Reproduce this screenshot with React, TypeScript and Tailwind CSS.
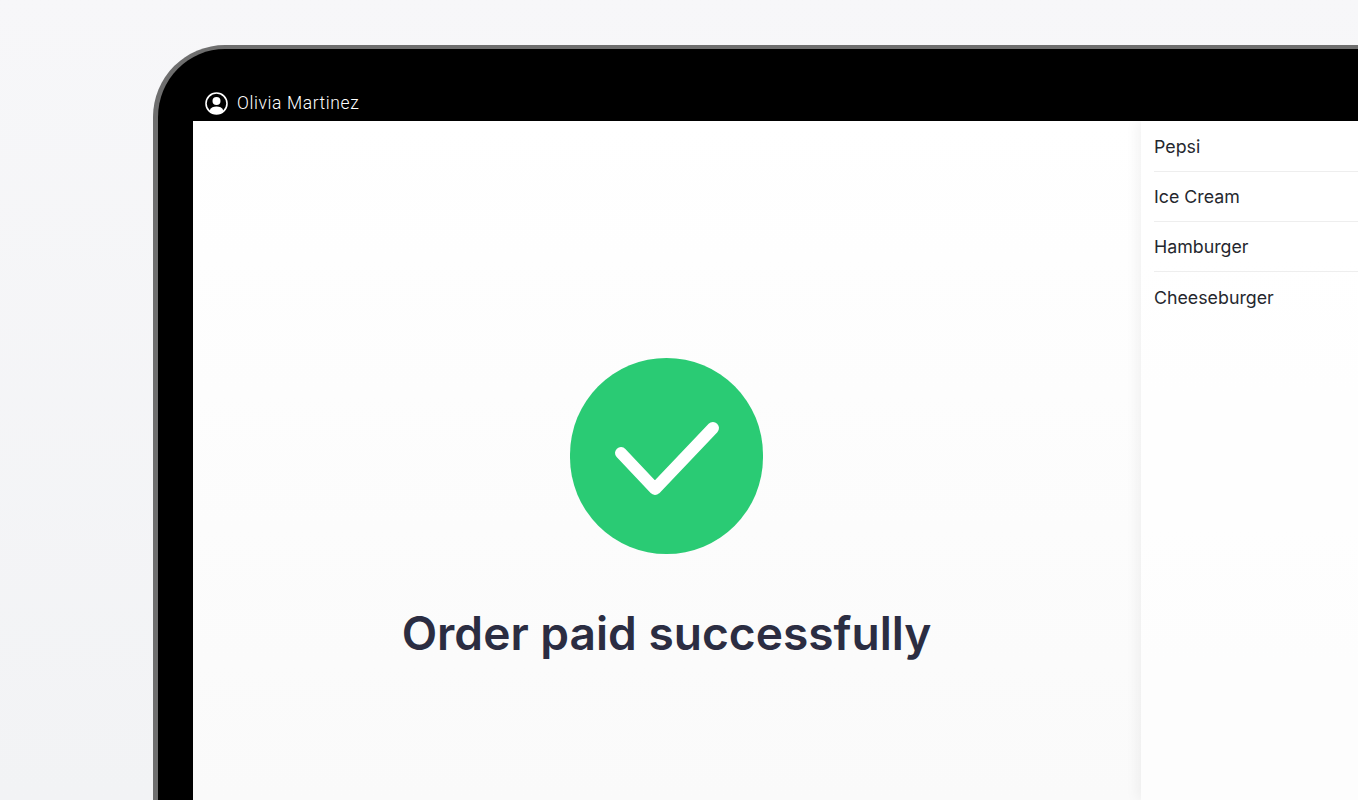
export default function App() {
  const items = ["Pepsi", "Ice Cream", "Hamburger", "Cheeseburger"];
  return (
    <div className="h-[800px] w-[1358px] overflow-hidden bg-gradient-to-b from-[#f7f7f9] to-[#f2f3f5] pl-[153px] pt-[45px] font-['Inter',sans-serif]">
      <div className="flex h-[755px] flex-col rounded-tl-[72px] border-l-[5px] border-t-[4px] border-[#6e6e6e] bg-black pl-[35px]">
        <header className="flex h-[72px] shrink-0 items-end pb-[6px] pl-[12px] text-white">
          <svg width="23" height="23" viewBox="0 0 23 23" className="shrink-0">
            <circle cx="11.5" cy="11.5" r="10.5" fill="none" stroke="white" strokeWidth="1.6" />
            <circle cx="11.5" cy="9" r="4" fill="white" />
            <path d="M4.5 18.5C6 15.3 8.5 14.5 11.5 14.5s5.5.8 7 4c-1.8 2-4.3 3.4-7 3.4s-5.2-1.4-7-3.4z" fill="white" />
          </svg>
          <span className="ml-[9px] text-[17.5px] leading-[23px] font-light tracking-[0.6px] font-['Roboto',sans-serif]">Olivia Martinez</span>
        </header>
        <div className="flex min-h-0 flex-1 bg-gradient-to-b from-white to-[#fafafa]">
          <main className="flex flex-1 flex-col items-center pr-[1px] pt-[237px]">
            <div className="flex h-[196px] w-[193px] items-center justify-center rounded-full bg-[#2acb74]">
              <svg width="193" height="196" viewBox="0 0 193 196">
                <path d="M51 95L85 131L143 70" fill="none" stroke="white" strokeWidth="12" strokeLinecap="round" strokeLinejoin="round" />
              </svg>
            </div>
            <h1 className="mt-[50px] text-[46.1px] leading-[58px] font-semibold text-[#2b2d42]">Order paid successfully</h1>
          </main>
          <aside className="w-[217px] shrink-0 bg-white/50 pl-[13px] pt-[0.5px] text-[17.8px] font-normal text-[#25272e] shadow-[-4px_0_12px_rgba(0,0,0,0.05)]">
            {items.map((item, i) => (
              <div key={item} className={`flex h-[50.3px] items-center pt-[2px] ${i < 3 ? "border-b border-[#eeeeee]" : ""}`}>
                {item}
              </div>
            ))}
          </aside>
        </div>
      </div>
    </div>
  );
}
